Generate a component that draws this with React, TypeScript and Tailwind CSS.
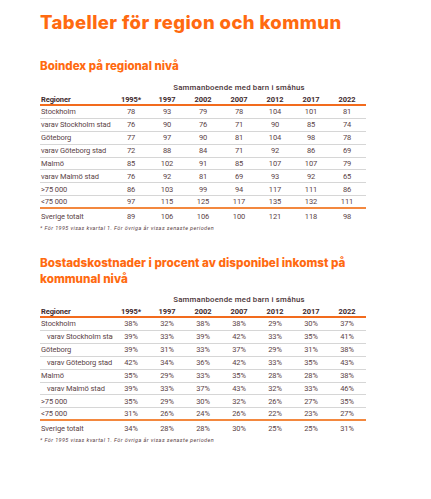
const years = ["1995*", "1997", "2002", "2007", "2012", "2017", "2022"]

interface Row {
  name: string
  sub?: boolean
  values: string[]
}

const boindex: Row[] = [
  { name: "Stockholm", values: ["78", "93", "79", "78", "104", "101", "81"] },
  { name: "varav Stockholm stad", sub: true, values: ["76", "90", "76", "71", "90", "85", "74"] },
  { name: "Göteborg", values: ["77", "97", "90", "81", "104", "98", "78"] },
  { name: "varav Göteborg stad", sub: true, values: ["72", "88", "84", "71", "92", "86", "69"] },
  { name: "Malmö", values: ["85", "102", "91", "85", "107", "107", "79"] },
  { name: "varav Malmö stad", sub: true, values: ["76", "92", "81", "69", "93", "92", "65"] },
  { name: ">75 000", values: ["86", "103", "99", "94", "117", "111", "86"] },
  { name: "<75 000", values: ["97", "115", "125", "117", "135", "132", "111"] },
]
const boindexTotal = ["89", "106", "106", "100", "121", "118", "98"]

const kostnad: Row[] = [
  { name: "Stockholm", values: ["38%", "32%", "38%", "38%", "29%", "30%", "37%"] },
  { name: "varav Stockholm stad", sub: true, values: ["39%", "33%", "39%", "42%", "33%", "35%", "41%"] },
  { name: "Göteborg", values: ["39%", "31%", "33%", "37%", "29%", "31%", "38%"] },
  { name: "varav Göteborg stad", sub: true, values: ["42%", "34%", "36%", "42%", "33%", "35%", "43%"] },
  { name: "Malmö", values: ["35%", "29%", "33%", "35%", "28%", "28%", "38%"] },
  { name: "varav Malmö stad", sub: true, values: ["39%", "33%", "37%", "43%", "32%", "33%", "46%"] },
  { name: ">75 000", values: ["35%", "29%", "30%", "32%", "26%", "27%", "35%"] },
  { name: "<75 000", values: ["31%", "26%", "24%", "26%", "22%", "23%", "27%"] },
]
const kostnadTotal = ["34%", "28%", "28%", "30%", "25%", "25%", "31%"]

function DataTable({ rows, total, indent }: { rows: Row[]; total: string[]; indent: boolean }) {
  return (
    <div className="w-[326px] text-[7.5px] tracking-[-0.1px] text-[#5b4346] font-['Roboto',sans-serif]">
      <div className="grid grid-cols-[73px_repeat(7,36px)] h-[12px] items-center">
        <div />
        <div className="col-span-7 text-center text-[7.8px] tracking-[0.2px] font-medium text-[#4a3337]">Sammanboende med barn i småhus</div>
      </div>
      <div className="grid grid-cols-[73px_repeat(7,36px)] h-[12px] items-center border-b-2 border-[#f26b1d] font-bold text-[#3f2a2e]">
        <div className="pl-[1px]">Regioner</div>
        {years.map((y) => (
          <div key={y} className="text-center">{y}</div>
        ))}
      </div>
      {rows.map((r, i) => (
        <div
          key={r.name}
          className={`grid grid-cols-[73px_repeat(7,36px)] h-[12.9px] items-center ${i === rows.length - 1 ? "border-b-2 border-[#f3883f]" : "border-b border-[#d6d6d6]"}`}
        >
          <div className={`whitespace-nowrap overflow-hidden ${indent && r.sub ? "pl-[7px]" : "pl-[1px]"}`}>{r.name}</div>
          {r.values.map((v, j) => (
            <div key={j} className="text-center">{v}</div>
          ))}
        </div>
      ))}
      <div className="grid grid-cols-[73px_repeat(7,36px)] h-[14px] items-center">
        <div className="pl-[1px]">Sverige totalt</div>
        {total.map((v, j) => (
          <div key={j} className="text-center">{v}</div>
        ))}
      </div>
      <div className="mt-[2px] text-[5.5px] leading-[7px] tracking-[0.4px] italic text-[#5b4346]">
        * För 1995 visas kvartal 1. För övriga år visas senaste perioden
      </div>
    </div>
  )
}

export default function App() {
  return (
    <div className="w-[431px] h-[499px] bg-white pl-[40px] pt-[10px] font-['Inter',sans-serif]">
      <h1 className="text-[18.5px] leading-[24px] font-extrabold text-[#ff6a10] tracking-[0.4px]">Tabeller för region och kommun</h1>
      <h2 className="mt-[24px] text-[11.5px] leading-[16px] font-extrabold text-[#ff6a10]">Boindex på regional nivå</h2>
      <div className="mt-[8px]">
        <DataTable rows={boindex} total={boindexTotal} indent={false} />
      </div>
      <h2 className="mt-[23px] w-[310px] text-[11.7px] leading-[16px] font-extrabold text-[#ff6a10]">
        Bostadskostnader i procent av disponibel inkomst på kommunal nivå
      </h2>
      <div className="mt-[7px]">
        <DataTable rows={kostnad} total={kostnadTotal} indent={true} />
      </div>
    </div>
  )
}
